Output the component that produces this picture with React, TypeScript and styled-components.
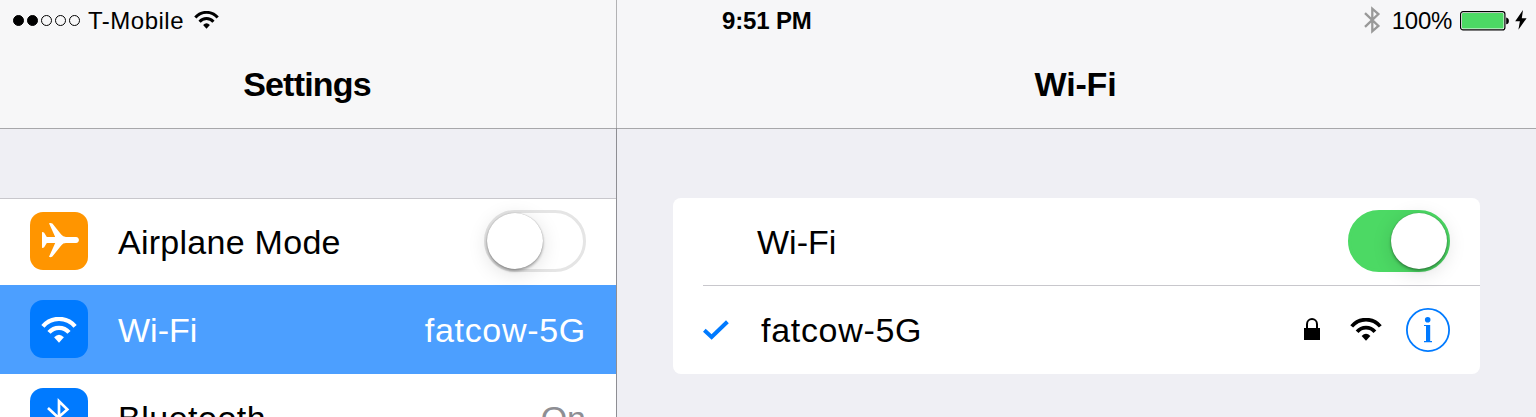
import React from "react";
import styled, { createGlobalStyle, css } from "styled-components";

const GlobalStyle = createGlobalStyle`
  * { box-sizing: border-box; }
  body {
    margin: 0;
    background: #efeff4;
    font-family: "Liberation Sans", Arial, Helvetica, sans-serif;
    color: #000;
  }
  svg { display: block; flex: none; }
`;

const Screen = styled.main`
  display: grid;
  grid-template-columns: 617px 1fr;
  width: 1536px;
  height: 417px;
  overflow: hidden;
`;

const Panel = styled.section<{ $divided?: boolean }>`
  display: flex;
  flex-direction: column;
  min-width: 0;
  height: 417px;
  overflow: hidden;
  background: #efeff4;
  ${(p) => p.$divided && css`
    border: 0 solid #8e8e93;
    border-right-width: 1px;
    border-image: linear-gradient(#b2b2b4 128px, #8e8e93 128px) 1;
  `}
`;

const Header = styled.header<{ $bg: string }>`
  flex: none;
  height: 129px;
  background: ${(p) => p.$bg};
  border-bottom: 1px solid #a7a7aa;
`;

const StatusBar = styled.div<{ $left: number; $right?: number }>`
  display: flex;
  align-items: center;
  height: 40px;
  padding: 0 ${(p) => p.$right ?? 0}px 0 ${(p) => p.$left}px;
`;

const StatusText = styled.span<{ $spacing?: number; $medium?: boolean }>`
  font-size: 24px;
  line-height: 40px;
  padding-top: 2px;
  white-space: nowrap;
  letter-spacing: ${(p) => p.$spacing ?? 0}px;
  font-weight: ${(p) => (p.$medium ? 700 : 400)};
`;

const Title = styled.h1<{ $spacing?: number }>`
  margin: 0;
  padding: 24px 2px 0 0;
  font-size: 34px;
  font-weight: 700;
  line-height: 40px;
  text-align: center;
  letter-spacing: ${(p) => p.$spacing ?? 0}px;
`;

const Spacer = styled.div`
  flex: 1;
`;

const Signal = styled.div`
  display: flex;
  gap: 3px;
  margin-right: 8px;
`;

const SignalDot = styled.i<{ $on?: boolean }>`
  width: 11px;
  height: 11px;
  border: 1px solid #000;
  border-radius: 50%;
  background: ${(p) => (p.$on ? "#000" : "transparent")};
`;

const SideList = styled.div`
  flex: none;
  margin-top: 69px;
  background: #fff;
  border-top: 1px solid #c8c7cc;
`;

const SideRow = styled.div<{ $selected?: boolean; $first?: boolean }>`
  display: flex;
  align-items: flex-start;
  height: ${(p) => (p.$first ? 86 : p.$selected ? 89 : 88)}px;
  padding: ${(p) => (p.$first ? 13 : p.$selected ? 15 : 14)}px 30px 0;
  background: ${(p) => (p.$selected ? "#4c9fff" : "#fff")};
  color: ${(p) => (p.$selected ? "#fff" : "#000")};
`;

const AppIcon = styled.div<{ $bg: string }>`
  width: 58px;
  height: 58px;
  margin-right: 30px;
  border-radius: 13px;
  background: ${(p) => p.$bg};
`;

const Label = styled.span<{ $spacing?: number; $color?: string }>`
  font-size: 34px;
  line-height: 40px;
  padding-top: 10px;
  white-space: nowrap;
  letter-spacing: ${(p) => p.$spacing ?? 0}px;
  ${(p) => p.$color && css`color: ${p.$color};`}
`;

const Track = styled.div<{ $on?: boolean }>`
  display: flex;
  justify-content: ${(p) => (p.$on ? "flex-end" : "flex-start")};
  width: 102px;
  height: 62px;
  margin-top: -2px;
  border: 3px solid ${(p) => (p.$on ? "#4cd964" : "#e5e5e5")};
  border-radius: 31px;
  background: ${(p) => (p.$on ? "#4cd964" : "#fff")};
`;

const Knob = styled.div`
  width: 56px;
  height: 56px;
  border-radius: 50%;
  background: #fff;
  box-shadow: 0 0 1px rgba(0, 0, 0, 0.35), 0 2px 3px rgba(0, 0, 0, 0.32),
    0 4px 20px rgba(0, 0, 0, 0.13);
`;

const Card = styled.div`
  width: 807px;
  height: 176px;
  margin: 69px 0 0 56px;
  border-radius: 8px;
  background: #fff;
`;

const CardRow = styled.div<{ $left: number; $divider?: boolean }>`
  display: flex;
  align-items: flex-start;
  height: 88px;
  margin-left: 30px;
  padding: 14px 30px 0 ${(p) => p.$left}px;
  ${(p) => p.$divider && css`border-bottom: 1px solid #c8c7cc;`}
`;

const Glyph = styled.div<{ $top: number; $gap?: number; $before?: number }>`
  margin-top: ${(p) => p.$top}px;
  margin-right: ${(p) => p.$gap ?? 0}px;
  margin-left: ${(p) => p.$before ?? 0}px;
`;

const InfoButton = styled.div`
  width: 44px;
  height: 44px;
  margin-top: 8px;
`;

const WifiGlyph = ({ width, color }: { width: number; color: string }) => (
  <svg width={width} height={(width * 26) / 36} viewBox="0 0 36 26" fill="none" stroke={color} strokeWidth="4.2">
    <path d="M1.9 9.4A21 21 0 0 1 34.1 9.4" />
    <path d="M8 15.4A13.2 13.2 0 0 1 28 15.4" />
    <path d="M13.1 20.2Q18 15.1 22.9 20.2L18 25.7Z" fill={color} stroke="none" />
  </svg>
);

const AirplaneGlyph = () => (
  <svg width="58" height="58" viewBox="0 0 58 58" fill="#fff">
    <path d="M12 20L14 20.4L16.8 25H25.2L19 11.2Q20.8 10.4 22.4 11.6L31.2 22.6Q33 25 36 25H46C49.9 25.2 49.9 30.8 46 31H36Q33 31 31.2 33.4L22.4 44.5Q20.8 45.6 19 44.8L25.2 31H16.8L14 35.6L12 36Z" />
  </svg>
);

const BluetoothGlyph = () => (
  <svg width="58" height="58" viewBox="0 0 58 58" fill="none" stroke="#fff" strokeWidth="2.7">
    <path d="M18 20L37.3 38L29 46.5V13.2L37.3 21.4L18 38.5" />
  </svg>
);

const StatusBluetooth = () => (
  <svg width="17" height="28" viewBox="0 0 17 28" fill="none" stroke="#999" strokeWidth="2.3">
    <path d="M1 7.2L14.4 19.9L8.3 25.3V2.7L14.4 8.1L1 20.8" />
  </svg>
);

const Battery = () => (
  <svg width="50" height="20" viewBox="0 0 50 20">
    <rect x="0.6" y="0.6" width="44.3" height="18.3" rx="2.5" fill="#fff" stroke="#000" strokeWidth="1.2" />
    <rect x="2" y="2" width="41.5" height="15.6" rx="1" fill="#4cd964" />
    <path d="M46.2 6.4C49.8 6.8 49.8 12.9 46.2 13.3Z" />
  </svg>
);

const Bolt = () => (
  <svg width="12" height="20" viewBox="0 0 12 20">
    <path d="M8 0L0.2 11.2H4.9L3.4 19.8L11.6 8.2H6.8Z" />
  </svg>
);

const Check = () => (
  <svg width="27" height="21" viewBox="0 0 27 21" fill="none" stroke="#007aff" strokeWidth="4">
    <path d="M1.3 10.3L8.6 17L24.4 1.8" />
  </svg>
);

const Lock = () => (
  <svg width="16" height="22" viewBox="0 0 16 22">
    <path d="M3 11V6.2C3 -0.6 13 -0.6 13 6.2V11" fill="none" stroke="#000" strokeWidth="2" />
    <rect y="10" width="16" height="12" />
  </svg>
);

const Info = () => (
  <svg width="44" height="44" viewBox="0 0 44 44" fill="#007aff">
    <circle cx="22" cy="22" r="21.1" fill="none" stroke="#007aff" strokeWidth="1.8" />
    <circle cx="21.7" cy="11.8" r="2.8" />
    <path d="M18 17H24.2V33H26V34.2H18V33H20V18.1H18Z" />
  </svg>
);

export default function App() {
  return (
    <Screen>
      <GlobalStyle />
      <Panel $divided>
        <Header $bg="#f7f7f8">
          <StatusBar $left={13}>
            <Signal>
              <SignalDot $on />
              <SignalDot $on />
              <SignalDot />
              <SignalDot />
              <SignalDot />
            </Signal>
            <StatusText $spacing={0.5}>T-Mobile</StatusText>
            <Glyph $top={1} $before={10}>
              <WifiGlyph width={25} color="#000" />
            </Glyph>
          </StatusBar>
          <Title $spacing={-0.8}>Settings</Title>
        </Header>
        <SideList>
          <SideRow $first>
            <AppIcon $bg="#ff9500"><AirplaneGlyph /></AppIcon>
            <Label $spacing={0.27}>Airplane Mode</Label>
            <Spacer />
            <Track><Knob /></Track>
          </SideRow>
          <SideRow $selected>
            <AppIcon $bg="#007aff">
              <svg width="58" height="58" viewBox="0 0 58 58">
                <g transform="translate(11 17)"><WifiGlyph width={36} color="#fff" /></g>
              </svg>
            </AppIcon>
            <Label>Wi-Fi</Label>
            <Spacer />
            <Label $spacing={0.7}>fatcow-5G</Label>
          </SideRow>
          <SideRow>
            <AppIcon $bg="#007aff"><BluetoothGlyph /></AppIcon>
            <Label $spacing={0.5}>Bluetooth</Label>
            <Spacer />
            <Label $color="#8e8e93">On</Label>
          </SideRow>
        </SideList>
      </Panel>
      <Panel>
        <Header $bg="#f6f6f8">
          <StatusBar $left={105} $right={9}>
            <StatusText $medium $spacing={-0.15}>9:51 PM</StatusText>
            <Spacer />
            <Glyph $top={0} $gap={11}><StatusBluetooth /></Glyph>
            <StatusText $spacing={-0.3}>100%</StatusText>
            <Glyph $top={2} $gap={5} $before={8}><Battery /></Glyph>
            <Bolt />
          </StatusBar>
          <Title $spacing={-0.2}>Wi-Fi</Title>
        </Header>
        <Card>
          <CardRow $left={54} $divider>
            <Label>Wi-Fi</Label>
            <Spacer />
            <Track $on><Knob /></Track>
          </CardRow>
          <CardRow $left={0}>
            <Glyph $top={20} $gap={31}><Check /></Glyph>
            <Label $spacing={0.7}>fatcow-5G</Label>
            <Spacer />
            <Glyph $top={18} $gap={30}><Lock /></Glyph>
            <Glyph $top={18} $gap={24}><WifiGlyph width={32} color="#000" /></Glyph>
            <InfoButton><Info /></InfoButton>
          </CardRow>
        </Card>
      </Panel>
    </Screen>
  );
}
